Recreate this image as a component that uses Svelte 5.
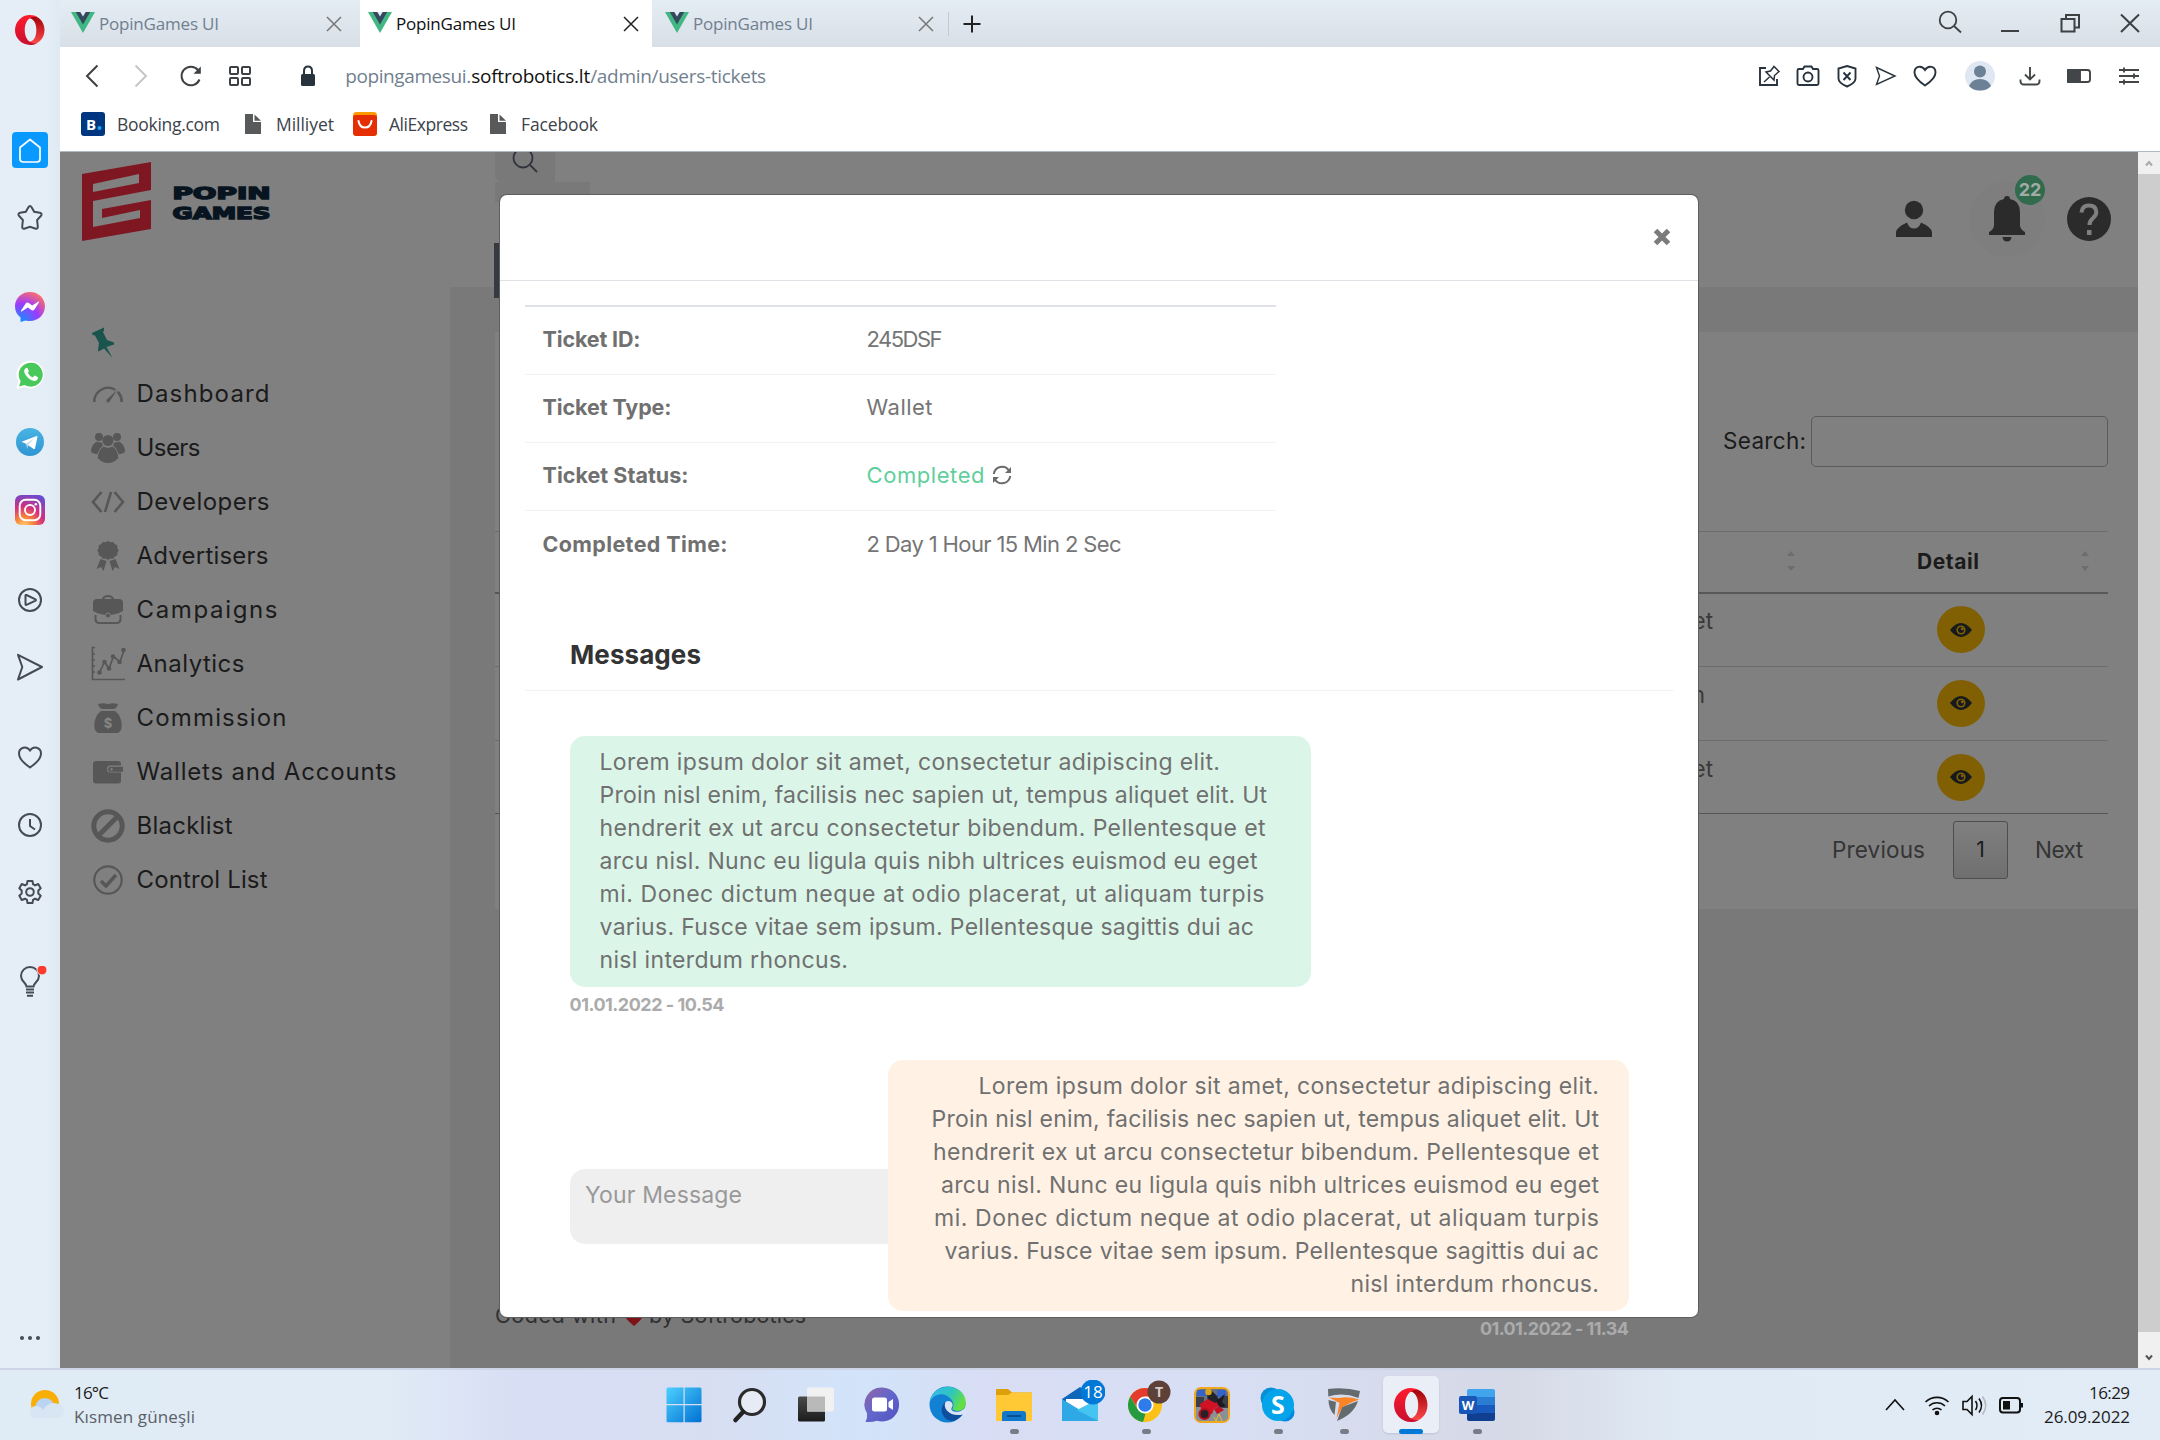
<script>
  const tabs = [false, true, false];
  const bookmarks = [
    { icon: 'booking', label: 'Booking.com', w: 103, gap: 25 },
    { icon: 'file', label: 'Milliyet', w: 58, gap: 19 },
    { icon: 'ali', label: 'AliExpress', w: 79, gap: 22 },
    { icon: 'file', label: 'Facebook', w: 77, gap: 0 }
  ];
  const rail = [
    ['home', 'star'],
    ['messenger', 'whatsapp', 'telegram', 'instagram'],
    ['play', 'send'],
    ['heart', 'clock', 'gear'],
    ['bulb']
  ];
  const menu = [
    ['dash', 'Dashboard', 133],
    ['users', 'Users', 64],
    ['code', 'Developers', 133],
    ['award', 'Advertisers', 132],
    ['case', 'Campaigns', 141],
    ['chart', 'Analytics', 108],
    ['bag', 'Commission', 150],
    ['wallet', 'Wallets and Accounts', 260],
    ['ban', 'Blacklist', 96],
    ['check', 'Control List', 131]
  ];
  const details = [
    ['Ticket ID:', 98, '245DSF', 76],
    ['Ticket Type:', 129, 'Wallet', 66],
    ['Ticket Status:', 146, 'Completed', 118],
    ['Completed Time:', 185, '2 Day 1 Hour 15 Min 2 Sec', 255]
  ];
  const lines = [
    ['Lorem ipsum dolor sit amet, consectetur adipiscing elit.', 620.5],
    ['Proin nisl enim, facilisis nec sapien ut, tempus aliquet elit. Ut', 667.5],
    ['hendrerit ex ut arcu consectetur bibendum. Pellentesque et', 666],
    ['arcu nisl. Nunc eu ligula quis nibh ultrices euismod eu eget', 658],
    ['mi. Donec dictum neque at odio placerat, ut aliquam turpis', 665],
    ['varius. Fusce vitae sem ipsum. Pellentesque sagittis dui ac', 654.5],
    ['nisl interdum rhoncus.', 248.5]
  ];
  const rows = ['et', 'n', 'et'];
  const apps = [
    ['windows'], ['search'], ['taskview'], ['chat'], ['edge'], ['folder', 'dot'], ['mail'],
    ['chrome', 'dot'], ['game'], ['skype', 'dot'], ['shield', 'dot'], ['opera', 'active'], ['word', 'dot']
  ];

  // Tracks a single line of text out (or in) to the given width.
  function fit(node, width) {
    const apply = () => {
      node.style.letterSpacing = '0px';
      node.style.marginRight = '0px';
      const natural = node.getBoundingClientRect().width;
      const gaps = Math.max(1, node.textContent.length - 1);
      const spacing = (width - natural) / gaps;
      node.style.letterSpacing = `${spacing}px`;
      node.style.marginRight = `${-spacing}px`;
    };
    apply();
    requestAnimationFrame(apply);
    document.fonts.ready.then(apply);
  }
</script>

{#snippet operaMark()}
  <svg width="34" height="34" viewBox="0 0 34 34">
    <defs>
      <linearGradient id="opL" x1="0" y1="0" x2="0" y2="1"><stop offset="0" stop-color="#ff1b2d" /><stop offset="1" stop-color="#c8102e" /></linearGradient>
      <linearGradient id="opR" x1="0" y1="0" x2="0" y2="1"><stop offset="0" stop-color="#a00008" /><stop offset="1" stop-color="#ff4b4b" /></linearGradient>
    </defs>
    <path fill="url(#opR)" fill-rule="evenodd" d="M12 3.500C15 0 24 0 28.500 4.700c6.600 6 6.600 18.600 0 24.600C24 34 15 34 12 30.500c9 1.500 12.200-5.500 12.200-13.500S21 2 12 3.500z" />
    <path fill="url(#opL)" fill-rule="evenodd" d="M17 0a17 17 0 1 0 0 34c3.300 0 6.300-.9 9-2.600-8 2.800-15-3.500-15-14.400S18 -.2 26 2.600A17 17 0 0 0 17 0z" />
  </svg>
{/snippet}

{#snippet railIcon(name)}
  {#if name === 'home'}
    <svg width="36" height="36" viewBox="0 0 36 36"><rect width="36" height="36" rx="4" fill="#0a9aff" /><path d="M8 15.500 18 7.500l10 8V27q0 3-3 3H11q-3 0-3-3z" fill="none" stroke="#fff" stroke-width="1.700" stroke-linejoin="round" /></svg>
  {:else if name === 'star'}
    <svg class="line" width="28" height="28" viewBox="0 -1 28 28"><path d="M12.400 3.300q1.600-2.600 3.200 0l2.600 4.500 5.600 1q3 .8 1 3.200l-3.700 4.200.7 6.300q.1 3-2.700 2L14 22.900l-5.100 1.600q-2.800 1-2.700-2l.7-6.300L3.200 12q-2-2.400 1-3.200l5.600-1z" /></svg>
  {:else if name === 'messenger'}
    <svg width="30" height="30" viewBox="0 0 30 30"><defs><radialGradient id="msg" cx=".2" cy="1" r="1.100"><stop offset="0" stop-color="#0c95ff" /><stop offset=".55" stop-color="#9b3bff" /><stop offset="1" stop-color="#ff6f67" /></radialGradient></defs><path fill="url(#msg)" d="M15 0c8.400 0 15 6.200 15 14.300S23.400 29 15 29c-1.500 0-3-.2-4.300-.6L5.500 30V25.500C2 23 0 19 0 14.300 0 6.200 6.600 0 15 0z" /><path fill="#fff" d="m6 18.700 4.600-7.200q1.500-1.700 3.200-.4l3.400 2.500 6.300-4q1-.3.500.7l-4.500 7.200q-1.500 1.600-3.200.4l-3.400-2.500-6.300 4.200q-1 .2-.6-.9z" /></svg>
  {:else if name === 'whatsapp'}
    <svg width="29" height="29" viewBox="0 -.5 29 29"><path fill="#fff" d="M.5 28.500 2.300 21A13.800 13.800 0 1 1 8.500 26.600z" /><path fill="#49c95c" d="M3 26l1.700-5.300A12 12 0 1 1 8.700 24.500z" /><path fill="#fff" d="M10 7.500q1-.8 1.700.4l1 2.300q.3.800-.9 2 1.600 3.200 4.900 4.700l1.500-1.600q.5-.4 1 0l2.400 1.200q.8.500.3 1.700-1.200 2.400-3.700 2.300-3.400-.4-6.600-3.500-3.200-3.200-3.500-6 0-2.200 1.900-3.500z" /></svg>
  {:else if name === 'telegram'}
    <svg width="28" height="28" viewBox="0 0 28 28"><defs><linearGradient id="tg" x1="0" y1="0" x2="0" y2="1"><stop offset="0" stop-color="#48b4e3" /><stop offset="1" stop-color="#2f95d3" /></linearGradient></defs><circle cx="14" cy="14" r="14" fill="url(#tg)" /><path fill="#fff" d="M5.500 13.800 20.700 8q1-.2.700 1.200l-2.400 11.200q-.3 1-1.300.5L10 15.800z" /><path fill="#c3dcec" d="m10 15.800 8.500-5.500-6.500 6.600-.7 4z" /></svg>
  {:else if name === 'instagram'}
    <svg width="30" height="30" viewBox="0 0 30 30"><defs><radialGradient id="ig" cx=".3" cy="1.050" r="1.100"><stop offset="0" stop-color="#fed576" /><stop offset=".28" stop-color="#f9853a" /><stop offset=".6" stop-color="#d42f7e" /><stop offset="1" stop-color="#6a4bd0" /></radialGradient></defs><rect width="30" height="30" rx="6" fill="url(#ig)" /><rect x="4.700" y="4.700" width="20.600" height="20.600" rx="6" fill="none" stroke="#fff" stroke-width="1.900" /><circle cx="15" cy="15" r="5" fill="none" stroke="#fff" stroke-width="1.900" /><circle cx="20.800" cy="9.200" r="1.300" fill="#fff" /></svg>
  {:else if name === 'play'}
    <svg class="line" width="26" height="26" viewBox="0 0 26 26"><circle cx="13" cy="13" r="11" /><path d="M8.500 8.500q0-.8 1-.5l9 4.300q.9.600 0 1.300l-9 4.200q-1 .3-1-.6z" /></svg>
  {:else if name === 'send'}
    <svg class="line" width="28" height="28" viewBox="0 0 28 28"><path d="M2 1.800 26 14 2 26.500 6.300 14z" stroke-linejoin="round" /></svg>
  {:else if name === 'heart'}
    <svg class="line" width="26" height="26" viewBox="0 0 26 26"><path d="M13 23.500Q2 16 2 9.500C2 3.500 9.500 1 13 6.500 16.500 1 24 3.500 24 9.500Q24 16 13 23.500z" /></svg>
  {:else if name === 'clock'}
    <svg class="line" width="26" height="26" viewBox="0 0 26 26"><circle cx="13" cy="13" r="11" /><path d="M13 7v7l5 3.500" /></svg>
  {:else if name === 'gear'}
    <svg class="line" width="26" height="26" viewBox="0 0 26 26"><path d="M10.500 2h5l.5 3.200 2 1.200 3.200-1.400 2.500 4.300L21.300 11.500v3l2.400 2.200-2.500 4.300-3.200-1.300-2 1.100-.5 3.200h-5l-.5-3.200-2-1.100L4.800 21l-2.500-4.300 2.400-2.200v-3L2.300 9.300 4.800 5 8 6.400l2-1.200z" stroke-linejoin="round" /><circle cx="13" cy="13" r="3.800" /></svg>
  {:else if name === 'bulb'}
    <svg class="line" width="34" height="32" viewBox="0 0 34 32"><path d="M13.500 20.500c0-3.500-5.500-5-5.500-10.500a9 9 0 0 1 18 0c0 5.500-5.500 7-5.500 10.500z" /><path d="M13 23.500h8M13 26.500h8M14 29.700h6" stroke-width="2" /><circle cx="29" cy="4" r="5" fill="#ff3b30" stroke="#e4edf6" stroke-width="1" /></svg>
  {/if}
{/snippet}

{#snippet menuIcon(name)}
  <svg width="36" height="36" viewBox="0 0 36 36" fill="#575757">
    {#if name === 'dash'}
      <path d="M3 26a15 15 0 0 1 23-13l-1.300 1.700A12.600 12.600 0 0 0 5.600 26zM28.500 14.700A15 15 0 0 1 33 26h-2.600a12.600 12.600 0 0 0-3.600-9z" /><path d="m27.500 13.500-8 12.200q-1.500 1.300-2.700.2-.9-1.300.4-2.600z" />
    {:else if name === 'users'}
      <circle cx="18" cy="10.500" r="5.500" /><circle cx="9" cy="7" r="4" /><circle cx="27" cy="7" r="4" /><path d="M13.500 16.500q4.500 2.500 9 0 5.500 4 5.800 11.500Q24 33 18 33T7.700 28q.3-7.500 5.800-11.500zM7 11.500q2 1.200 4.300.5.700 2 1.800 3.200-4 3.500-6 9Q3 23.700 1 22q0-7.500 6-10.500zM29 11.500q-2 1.200-4.300.5-.7 2-1.800 3.200 4 3.500 6 9 4.100-.5 6.100-2.200 0-7.500-6-10.500z" />
    {:else if name === 'code'}
      <path d="M11.500 8 3 18l8.500 10M24.500 8 33 18l-8.500 10M21 8l-6 20" fill="none" stroke="#575757" stroke-width="2.600" />
    {:else if name === 'award'}
      <path d="m18 3 2.500 1.200 2.700-.3 1.600 2.200 2.400 1.200.2 2.700 1.300 2.300-1.300 2.400-.2 2.700-2.400 1.200-1.600 2.200-2.700-.3L18 21.800l-2.500-1.300-2.700.3-1.600-2.200-2.400-1.200-.2-2.700-1.300-2.400 1.300-2.300.2-2.700 2.400-1.200 1.600-2.200 2.700.3z" /><path d="m10.500 21 6 2-3 10-2.500-4-4.500 2zM25.500 21l-6 2 3 10 2.500-4 4.500 2z" />
    {:else if name === 'case'}
      <path d="M12 7q1-4 6-4t6 4h5q4 0 4 4v8q-7 4-15 4T3 19v-8q0-4 4-4zm2 0h8q-1-2-4-2t-4 2z" fill-rule="evenodd" /><path d="M5.500 23v4q0 4 4 4h17q4 0 4-4v-4" fill="none" stroke="#575757" stroke-width="2" /><circle cx="18" cy="23.500" r="2.500" stroke="#808080" />
    {:else if name === 'chart'}
      <path d="M5 1.500H2.500v32H35M2 8h3M2 14h3M2 20h3M2 26h3M9.500 26.500l5-10.500 4.500 6.500 4.500-12 6.500 5.500 4-12" fill="none" stroke="#575757" stroke-width="1.700" /><circle cx="9.500" cy="26.500" r="2.300" /><circle cx="14.500" cy="16" r="2.300" /><circle cx="19" cy="22.500" r="2.300" /><circle cx="23" cy="10.500" r="2.300" /><circle cx="29.500" cy="16" r="2.300" /><circle cx="33.500" cy="4" r="2.300" />
    {:else if name === 'bag'}
      <path d="M8 4.500q5-2.500 10-.3 5-2.200 10 .3-1.500 4-4.500 4.500h-11Q9.500 8.500 8 4.500zM11 11h14q7 5 6.700 15.500Q31 33 27 33H9q-4 0-4.700-6.500Q4 16 11 11z" /><text class="coin" x="18" y="28">$</text>
    {:else if name === 'wallet'}
      <path d="M3 10q0-3 3-3h22q3 0 3 3v1.500H20q-3 0-3 3.500t3 3.500h11V27q0 2.500-3 2.500H6q-3 0-3-3z" /><path d="M20 12.800h13v5H20q-2 0-2-2.500t2-2.500zm1.500 1.200a1.300 1.300 0 1 0 .1 0z" fill-rule="evenodd" />
    {:else if name === 'ban'}
      <circle cx="18" cy="18" r="14.200" fill="none" stroke="#575757" stroke-width="5" /><path d="m8.500 27.500 19-19" stroke="#575757" stroke-width="5" />
    {:else if name === 'check'}
      <circle cx="18" cy="18" r="13.700" fill="none" stroke="#575757" stroke-width="2.200" /><path d="m11 19 5 5 10-11" fill="none" stroke="#575757" stroke-width="3.500" />
    {/if}
  </svg>
{/snippet}

{#snippet appIcon(name)}
  {#if name === 'opera'}
    {@render operaMark()}
  {:else}
    <svg width="50" height="50" viewBox="-7 -7 50 50">
      {#if name === 'windows'}
        <defs><linearGradient id="wn" x1="0" y1="0" x2="1" y2="1"><stop offset="0" stop-color="#4dd0ff" /><stop offset="1" stop-color="#0070d2" /></linearGradient></defs>
        <path fill="url(#wn)" d="M2 .5h15.500V17H.500V2q0-1.500 1.500-1.500zM18.700.500H34q1.500 0 1.500 1.500v15H18.700zM.5 18.300h17v17H2q-1.500 0-1.500-1.500zM18.700 18.300h16.800v15.500q0 1.500-1.500 1.500H18.700z" />
      {:else if name === 'search'}
        <circle cx="20" cy="15" r="12.500" fill="#e6ebf6" stroke="#2b2b2b" stroke-width="3.200" /><path d="M11 25 3.500 33" stroke="#222" stroke-width="4.500" stroke-linecap="round" />
      {:else if name === 'taskview'}
        <defs><linearGradient id="tv" x1="0" y1="0" x2="0" y2="1"><stop offset="0" stop-color="#4a4a4a" /><stop offset="1" stop-color="#1c1c1c" /></linearGradient></defs>
        <rect y="9.500" width="27" height="25" rx="1.500" fill="url(#tv)" /><rect x="9" y=".5" width="27" height="24" rx="1.500" fill="#f1f1f1" /><rect x="9" y="9.500" width="18" height="15" fill="#b9b9b9" />
      {:else if name === 'chat'}
        <defs><linearGradient id="ct" x1="0" y1="0" x2="1" y2="1"><stop offset="0" stop-color="#9465a5" /><stop offset=".5" stop-color="#6066cc" /><stop offset="1" stop-color="#5450c0" /></linearGradient></defs>
        <path fill="url(#ct)" d="M18 .5a17 17 0 1 1-5 33.200q-5 1.800-11.500 1.300 2-3 1.600-8.500A17 17 0 0 1 18 .5z" /><rect x="8" y="10.500" width="15" height="14" rx="2.500" fill="#fff" /><path d="m24.500 15 4.500-3v11l-4.500-3z" fill="#fff" />
      {:else if name === 'edge'}
        <defs><linearGradient id="ed" x1="0" y1="0" x2="1" y2=".4"><stop offset="0" stop-color="#35b8f1" /><stop offset=".6" stop-color="#2fc5be" /><stop offset="1" stop-color="#63df45" /></linearGradient></defs>
        <circle cx="17.500" cy="17.500" r="18" fill="#1280d3" /><path fill="url(#ed)" d="M0 14.500C2-5 35-6 35.800 15.500c.2 9-9 9.500-12.800 7.300q-1.500-1 .2-3C26 12.500 10-1 0 14.500z" /><path fill="#0d4f9c" d="M15 15q-7 8 0 16 8 8 18.500-4.500Q25 30 20 24z" /><path fill="#dae3f6" d="M15.500 15c4-3 9 1.500 6.500 5-1.500 2.500-.5 4 3 4.700 5 .8 9.500-2.200 11-6v11L33 27.500c-12 3-21-5.500-17.500-12.500z" />
      {:else if name === 'folder'}
        <path fill="#dd9f0a" d="M0 3q0-1 1-1h11l4 3.500h19q1 0 1 1V12H0z" /><path fill="#ffc935" d="M0 8h12l4-2.500h20V34H0z" /><path fill="#0f78cb" d="M6 34v-7q0-3 3-3h18q3 0 3 3v7z" /><path d="M11 29h14" stroke="#0a4b8a" stroke-width="1.800" />
      {:else if name === 'mail'}
        <path fill="#1066b8" d="M0 12 18 0l18 12v22H0z" /><path fill="#fff" d="M4 12h28v12H4z" /><path fill="#2fa9e5" d="M0 12v22h36z" /><path fill="#45c4f1" d="M36 12v22L15 23z" /><circle cx="31" cy="5" r="12.500" fill="#0078d7" /><text class="count" x="31" y="11">18</text>
      {:else if name === 'chrome'}
        <circle cx="17" cy="18" r="17" fill="#fbc116" /><path fill="#e33b2e" d="M17 1A17 17 0 0 1 31.700 9.500H17L9 20 2.300 9.500A17 17 0 0 1 17 1z" /><path fill="#249a41" d="M2.300 9.500 9.600 22q3 4.500 8 4.500L15 35A17 17 0 0 1 2.300 9.500z" /><circle cx="17" cy="18" r="8.500" fill="#fff" /><circle cx="17" cy="18" r="6.700" fill="#2e7cec" /><circle cx="31" cy="5" r="11.500" fill="#5d4038" /><text class="initial" x="31" y="10">T</text>
      {:else if name === 'game'}
        <rect x="1" y="1" width="34" height="34" rx="6" fill="#69717c" stroke="#f0a81c" stroke-width="2" /><path fill="#3663c9" d="M3 3h9v6H3zM23 3h9v7h-9z" /><path fill="#8a9096" d="M2 20h32v9q0 5-5 5H7q-5 0-5-5z" /><path fill="#3a3e48" d="M2 10h8v10H2zM28 9h6v12h-6z" /><path fill="#23242b" d="m13 7 5-3 5 5 3 6-6 4-6-4z" /><circle cx="14.500" cy="5" r="3.300" fill="#d9a51c" /><path fill="#d01224" d="m6 17 8-5 7 4 9-7-3 8-7 5-2 5-8-1-3-4z" /><path fill="#1a1b22" d="m22 14 9-7-3 8 4 4-6 2z" /><circle cx="10.500" cy="27" r="5" fill="#2a2024" stroke="#b50f20" stroke-width="2.200" /><path d="m20 22 5-3 5 4-7 4z" fill="#c51122" /><path d="m20 30 2 4 3-7 3 7" stroke="#e4c22a" fill="none" />
      {:else if name === 'skype'}
        <circle cx="11" cy="11" r="10.500" fill="#0b8ed8" /><circle cx="25" cy="25" r="9.500" fill="#0089e0" /><circle cx="18" cy="18" r="16" fill="#03a4ea" /><text class="skype" x="18" y="27">S</text>
      {:else if name === 'shield'}
        <path fill="#646b6e" d="M2 2q17-2 32 2l-1.500 7Q17 5 2.300 9.500zM2.500 13l7.500 2-1.500 13Q2.500 22 2.500 13zM32 14q-4 13-21 20l5-14z" /><path fill="#fb8427" d="m3 10.500 10 .5q9-2 20 1.500-9 3-17 8l-5.500 11 3-15.500z" />
      {:else if name === 'word'}
        <path fill="#41a5ee" d="M8 4q0-2 2-2h24q2 0 2 2v6H8z" /><path fill="#2b7cd3" d="M8 10h28v8H8z" /><path fill="#185abd" d="M8 18h28v8H8z" /><path fill="#103f91" d="M8 26h28v6q0 2-2 2H10q-2 0-2-2z" /><rect y="9" width="18" height="18" rx="2" fill="#1a56b8" /><text class="wd" x="9" y="23">W</text>
      {/if}
    </svg>
  {/if}
{/snippet}

{#snippet bubble(side, stamp, w)}
  <article class="message {side}">
    <div class="bubble">
      {#each lines as [text, width]}
        <div class="ln"><span use:fit={width}>{text}</span></div>
      {/each}
    </div>
    <div class="stamp"><span use:fit={w}>{stamp}</span></div>
  </article>
{/snippet}

<div class="screen">
  <div class="browser">
    <aside class="rail">
      <div class="brand">{@render operaMark()}</div>
      {#each rail as group}
        <div class="group">
          {#each group as name}<div class="cell">{@render railIcon(name)}</div>{/each}
        </div>
      {/each}
      <div class="more"><i></i><i></i><i></i></div>
    </aside>

    <div class="window">
      <div class="tabs">
        {#each tabs as active}
          <div class="tab" class:active>
            <svg width="24" height="21" viewBox="0 0 24 21"><path fill="#41b883" d="M0 0h24L12 21z" /><path fill="#35495e" d="M4.800 0h14.400L12 12.500z" /><path fill="#e2eaf2" d="M9.300 0h5.400L12 4.600z" /></svg>
            <span class="tabname"><span use:fit={120}>PopinGames UI</span></span>
            <svg class="x" width="16" height="16" viewBox="0 0 16 16"><path d="m1 1 14 14M15 1 1 15" /></svg>
          </div>
        {/each}
        <svg class="plus" width="20" height="20" viewBox="0 0 20 20"><path d="M10 1.500v17M1.500 10h17" stroke="#222" stroke-width="2" /></svg>
        <div class="controls">
          <svg viewBox="0 0 60 47"><circle cx="28" cy="20" r="8.300" /><path d="m34 26 7 6.500" /></svg>
          <svg viewBox="0 0 60 47"><path d="M21 31h18" stroke-width="2" /></svg>
          <svg viewBox="0 0 60 47"><path d="M21.500 19h13v12.500h-13zM26 19v-4h13v12.500h-4.500" stroke-width="2" /></svg>
          <svg viewBox="0 0 60 47"><path d="m21 14.500 18 17.500M39 14.500 21 32" stroke-width="2" /></svg>
        </div>
      </div>

      <div class="nav">
        <div class="nb"><svg width="14" height="24" viewBox="0 0 14 24"><path d="M12.500 1.500 2 12l10.500 10.500" /></svg></div>
        <div class="nb off"><svg width="14" height="24" viewBox="0 0 14 24"><path d="M1.500 1.500 12 12 1.500 22.500" /></svg></div>
        <div class="nb"><svg width="24" height="24" viewBox="-1 0 24 24"><path d="M20.500 15.500A9.300 9.300 0 1 1 19 6" /><path d="M21.800 2.500v7.300h-7.300z" fill="#3d4144" stroke="none" /></svg></div>
        <div class="nb"><svg width="24" height="24" viewBox="0 0 24 24"><rect x="2" y="3" width="8" height="7" rx="1" /><rect x="14" y="3" width="8" height="7" rx="1" /><rect x="2" y="14" width="8" height="7" rx="1" /><rect x="14" y="14" width="8" height="7" rx="1" /></svg></div>
        <div class="lock"><svg width="16" height="22" viewBox="0 0 16 22"><path d="M4 10V6q0-4.500 4-4.500T12 6v4" fill="none" stroke="#28333d" stroke-width="2" /><rect x="1" y="9" width="14" height="12" rx="1.500" fill="#28333d" /></svg></div>
        <div class="url"><span use:fit={126}>popingamesui.</span><b use:fit={119}>softrobotics.lt</b><span use:fit={176}>/admin/users-tickets</span></div>
        <div class="tools">
          <svg viewBox="0 0 26 26"><path d="M10 5H4v17h17v-6" /><path d="m14.500 8 3.500-4.500 5 5-4.500 4-.5 4.500-8-8zm-1 6-5.500 5" stroke-width="1.500" /></svg>
          <svg viewBox="0 0 26 26"><path d="M8 6l1.500-2.500h7L18 6h4q1.500 0 1.500 1.500v13q0 1.500-1.500 1.500H4q-1.500 0-1.500-1.500v-13Q2.500 6 4 6z" /><circle cx="13" cy="14" r="4.500" /></svg>
          <svg viewBox="0 0 26 26"><path d="M13 3l8.500 2.500v10Q21.500 20 13 23.500 4.500 20 4.500 15.500v-10zM9.500 9.500l7 7.500m0-7.500-7 7.500" /></svg>
          <svg viewBox="0 0 26 26"><path d="M3.500 4.500 22 13 3.500 21.500 6.500 13z" stroke-width="1.400" /></svg>
          <svg viewBox="0 0 26 26"><path d="M13 22.500Q2.500 15.500 2.500 9.500C2.500 3.500 9.500 1.500 13 7 16.500 1.500 23.500 3.500 23.500 9.500Q23.500 15.500 13 22.500z" /></svg>
        </div>
        <div class="tools wide">
          <svg viewBox="0 0 30 30"><circle cx="15" cy="15" r="15" fill="#dfe8f2" stroke="none" /><g fill="#6c8096" stroke="none"><circle cx="15" cy="10.500" r="6" /><path d="M4 25q3-7 11-7t11 7q-4 4.500-11 4.500T4 25z" /></g></svg>
          <svg viewBox="0 0 30 30"><path d="M5.500 18.500V20q0 3.500 3.500 3.500h12q3.500 0 3.500-3.500v-1.500M15 6v12m-5-4.500 5 5 5-5" /></svg>
          <svg viewBox="0 0 30 30"><rect x="4" y="9" width="22" height="12" rx="2.500" /><path d="M4 9h12v12H4z" fill="#434648" /></svg>
          <svg viewBox="0 0 30 30"><path d="M5 9h20M5 15h20M5 21h20M10 6.500v5M20 12.500v5M10 18.500v5" /></svg>
        </div>
      </div>

      <div class="marks">
        {#each bookmarks as b}
          {#if b.icon === 'booking'}
            <svg width="24" height="24" viewBox="0 0 24 24"><rect width="24" height="24" rx="3" fill="#003580" /><text class="bk" x="10" y="17.500">B</text><circle cx="18.500" cy="16" r="2" fill="#17a6ee" /></svg>
          {:else if b.icon === 'ali'}
            <svg width="24" height="24" viewBox="0 0 24 24"><rect width="24" height="24" rx="3.500" fill="#ff9a00" /><path d="M0 5q0-2 3-2h18q3 0 3 2v15.500q0 3.500-3.500 3.500h-17Q0 24 0 20.500z" fill="#e62e04" /><path d="M5.500 9q1 6.500 6.500 6.500T18.500 9" fill="none" stroke="#fff" stroke-width="2" stroke-linecap="round" /></svg>
          {:else}
            <svg class="doc" width="16" height="20" viewBox="0 0 16 20"><path d="M0 0h8v8h8v12H0zM9.500.5 16 6.800H9.500z" fill="#58595b" /></svg>
          {/if}
          <span class="mark" style="margin-right:{b.gap}px"><span use:fit={b.w}>{b.label}</span></span>
        {/each}
      </div>

      <div class="page">
        <div class="sidebar">
          <svg class="logo" width="190" height="82" viewBox="0 0 190 82">
            <path fill="#7f1722" fill-rule="evenodd" d="M0 13 69 1v28L11 40v26l47-9V49l-38 8V48l49-9v29L0 80zM11 23v8l46-9v-9z" />
            <text x="90.500" y="38" textLength="98" lengthAdjust="spacingAndGlyphs">POPIN</text>
            <text x="90.500" y="57.500" textLength="98" lengthAdjust="spacingAndGlyphs">GAMES</text>
          </svg>
          <svg class="pin" width="24" height="32" viewBox="0 0 24 32"><path fill="#1b544c" d="M1 6 13 .5v3L12 5l4 8 7 2.500v2L15.500 20l6 11L13 21.500l-5.500 3-.5-1.500 1-7-4-7.500-2.500-.5z" /></svg>
          <nav>
            {#each menu as [icon, label, w]}
              <div class="item">{@render menuIcon(icon)}<span use:fit={w}>{label}</span></div>
            {/each}
          </nav>
        </div>

        <div class="content">
          <header class="top">
            <div class="find"><svg width="30" height="30" viewBox="0 0 30 30"><circle cx="13" cy="11" r="9.500" /><path d="m20 18 7 7" /></svg></div>
            <div class="find-drop"></div>
            <div class="accent"></div>
            <div class="actions">
              <svg width="36" height="38" viewBox="0 0 36 38" fill="#2b2b2b"><circle cx="18" cy="10" r="9.200" /><path d="M0 37V32q1-5 11-9.500 2 6 7 6t7-6Q35 27 36 32v5z" /></svg>
              <div class="bell">
                <svg width="36" height="46" viewBox="0 0 36 46" fill="#2b2b2b"><path d="M15 3q0-3 3-3t3 3q10 2 10 13v14q1 4 5 6v3H0v-3q4-2 5-6V16Q5 5 15 3zM13.500 41h9q-.5 4.500-4.500 4.500T13.500 41z" /></svg>
                <span class="badge">22</span>
              </div>
              <svg width="44" height="44" viewBox="0 0 44 44"><circle cx="22" cy="22" r="22" fill="#2b2b2b" /><path d="M14.500 15.500q.5-7 7.500-7t7.300 6.500q0 3.500-3.500 6.300-3.300 2.500-3.300 6.700" fill="none" stroke="#808080" stroke-width="4" /><rect x="20" y="33" width="4.500" height="5" fill="#808080" /></svg>
            </div>
          </header>

          <section class="card">
            <div class="searchrow"><span use:fit={83}>Search:</span><div class="field"></div></div>
            <div class="grid head">
              <div class="sort"><svg width="8" height="20" viewBox="0 0 8 20"><path d="M4 0l4 5H0zM4 20l4-5H0z" /></svg></div>
              <b><span use:fit={62}>Detail</span></b>
              <div class="sort"><svg width="8" height="20" viewBox="0 0 8 20"><path d="M4 0l4 5H0zM4 20l4-5H0z" /></svg></div>
            </div>
            {#each rows as r, i}
              <div class="grid row">
                <span class="kind" class:short={i === 1}>{r}</span>
                <div class="eye"><svg width="22" height="16" viewBox="0 0 22 16"><path fill="#171a1c" d="M0 8Q11-6 22 8 11 22 0 8z" /><circle cx="11" cy="8" r="4.600" fill="#806003" /><circle cx="11" cy="8" r="3" fill="#171a1c" /><circle cx="12.300" cy="6.800" r="1.500" fill="#806003" /></svg></div>
              </div>
            {/each}
            <div class="pager"><span use:fit={93}>Previous</span><div class="num">1</div><span use:fit={48}>Next</span></div>
          </section>

          <footer class="credit"><span use:fit={121}>Coded with</span><svg width="20" height="18" viewBox="0 0 20 18"><path fill="#7f1216" d="M10 18Q0 10 0 5.500C0-.5 8-1.500 10 4 12-1.500 20-.5 20 5.500 20 10 10 18 10 18z" /></svg><span use:fit={157}>by Softrobotics</span></footer>
        </div>

        <div class="scroll">
          <div class="arrow"><svg width="8" height="7" viewBox="0 0 8 7"><path d="M1 5.500 4 2l3 3.500" stroke="#a9a9a9" /></svg></div>
          <div class="thumb"></div>
          <div class="arrow end"><svg width="8" height="7" viewBox="0 0 8 7"><path d="M1 1.500 4 5l3-3.500" stroke="#555" /></svg></div>
        </div>

        <div class="modal">
          <div class="mhead"><svg width="18" height="18" viewBox="0 0 18 18"><path d="m2.500 2.500 13 13M15.500 2.500l-13 13" stroke="#7b7b7b" stroke-width="5" /></svg></div>
          <div class="details">
            {#each details as [k, kw, v, vw], i}
              <div class="drow">
                <strong><span use:fit={kw}>{k}</span></strong>
                <span class="val" class:done={i === 2} use:fit={vw}>{v}</span>
                {#if i === 2}
                  <svg width="20" height="20" viewBox="0 0 20 20"><path d="M1.800 9A8.300 8.300 0 0 1 17 5.500M18.200 11A8.300 8.300 0 0 1 3 14.500" fill="none" stroke="#6b6b6b" stroke-width="2" /><path d="M19 2v6h-6zM1 18v-6h6z" fill="#6b6b6b" /></svg>
                {/if}
              </div>
            {/each}
          </div>
          <h3><span use:fit={131}>Messages</span></h3>
          <div class="composer"><span use:fit={157}>Your Message</span></div>
          {@render bubble('in', '01.01.2022 - 10.54', 155)}
          {@render bubble('out', '01.01.2022 - 11.34', 149)}
        </div>
      </div>
    </div>
  </div>

  <div class="taskbar">
    <div class="weather">
      <svg width="34" height="30" viewBox="0 0 34 30"><circle cx="15" cy="14" r="14" fill="#f9ae06" /><path fill="#b9d3f0" d="M5 18q1-9 9-10 8 0 10 7l-2 8H5z" /><path fill="#d8e6f3" d="M5 28q-5-1-5-6 0-6 6-6 5 0 7 4 3-6 10-7 10 0 11 8-1 7-7 7z" /></svg>
      <div><p><span use:fit={35}>16°C</span></p><p class="dim"><span use:fit={121}>Kısmen güneşli</span></p></div>
    </div>
    <div class="apps">
      {#each apps as [name, state]}
        <div class="app" class:current={state === 'active'}>
          {@render appIcon(name)}
          {#if state}<i class={state}></i>{/if}
        </div>
      {/each}
    </div>
    <div class="tray">
      <svg viewBox="0 0 36 30"><path d="m9 20 9-10 9 10" /></svg>
      <svg viewBox="0 0 36 30"><path d="M6.500 12a16.500 16.500 0 0 1 23 0M10 16a11.500 11.500 0 0 1 16 0M13.500 20a6.500 6.500 0 0 1 9 0" /><circle cx="18" cy="23" r="1.500" fill="#111" /></svg>
      <svg viewBox="0 0 36 30"><path d="M7 11.500h4l5-5v18l-5-5H7zM19.500 11q3 4.500 0 9M23 8.500q5 7 0 14" /><path d="M26.500 6.500q6.500 9 0 18" stroke="#b3bac4" /></svg>
      <svg viewBox="0 0 36 30"><rect x="7" y="8" width="20" height="14.500" rx="3" stroke-width="2" /><path d="M10 11h7v8.500h-7zM28 13h2v4.500h-2z" fill="#111" stroke="none" /></svg>
    </div>
    <div class="time"><p><span use:fit={41}>16:29</span></p><p><span use:fit={86}>26.09.2022</span></p></div>
  </div>
</div>

<style>
  :global(body) { margin: 0; }
  .screen { width: 2160px; height: 1440px; display: grid; grid-template-rows: 1368px 72px; overflow: hidden; font-family: Inter, 'Liberation Sans', sans-serif; box-sizing: border-box; }
  .screen :global(*) { box-sizing: border-box; }
  svg { display: block; flex: none; }
  span, b { white-space: nowrap; }
  p, h3 { margin: 0; }
  .browser { display: flex; }

  .rail { width: 60px; background: linear-gradient(90deg, #e5eef6 75%, #dfe9f3); display: flex; flex-direction: column; }
  .brand { height: 116px; display: flex; justify-content: center; padding-top: 15px; }
  .brand svg { width: 30px; height: 30px; }
  .group { margin-bottom: 22.500px; }
  .cell { height: 67.500px; display: grid; place-items: center; }
  .line { fill: none; stroke: #444b57; stroke-width: 2; }
  .more { margin-top: auto; height: 60px; display: flex; align-items: center; justify-content: center; gap: 4px; }
  .more i { width: 4px; height: 4px; border-radius: 50%; background: #444b57; }

  .window { width: 2100px; display: flex; flex-direction: column; background: #fff; }
  .tabs { height: 47px; display: flex; align-items: center; padding-left: 3px; background: linear-gradient(#e4ecf4, #d8dfe7); font-family: 'Open Sans', sans-serif; font-size: 17px; }
  .tab { width: 292px; height: 47px; margin-right: 5px; display: flex; align-items: center; padding-left: 8px; color: #71808f; }
  .tab > svg:first-child { margin-bottom: 2px; }
  .tab.active { background: #fff; color: #111; }
  .tabname { width: 231px; padding-left: 4px; }
  .x path { stroke: #777; stroke-width: 1.500; }
  .active .x path { stroke: #222; }
  .tab:nth-child(3)::after { content: ''; width: 1px; height: 24px; margin-left: 14px; background: #c3cad4; flex: none; }
  .plus { margin-left: 8px; }
  .controls { margin-left: auto; display: flex; }
  .controls svg { width: 60px; height: 47px; fill: none; stroke: #3d4144; stroke-width: 1.800; }

  .nav { height: 57px; display: flex; align-items: center; padding: 0 6px 0 7px; }
  .nb { width: 49.300px; display: grid; place-items: center; }
  .nb svg { fill: none; stroke: #3d4144; stroke-width: 2; }
  .nb.off svg { stroke: #c4c6c8; }
  .lock { width: 81px; padding-left: 36px; }
  .url { font-family: 'Open Sans', sans-serif; font-size: 19px; color: #71808f; display: flex; }
  .url b { font-weight: 400; color: #111; }
  .tools { margin-left: auto; display: flex; align-items: center; }
  .tools svg { width: 26px; height: 26px; margin: 0 6.500px; fill: none; stroke: #28333d; stroke-width: 1.900; }
  .tools.wide { margin-left: 10px; }
  .wide svg { width: 30px; height: 30px; margin: 0 9.900px; stroke: #434648; }
  .marks { height: 48px; padding: 0 0 7px 21px; border-bottom: 1px solid #afbac6; display: flex; align-items: center; font-family: 'Open Sans', sans-serif; font-size: 17.500px; color: #3c434b; }
  .mark { padding-left: 12px; }
  .doc + .mark { padding-left: 15px; }
  .bk { font: bold 15px 'Open Sans', sans-serif; fill: #fff; text-anchor: middle; }

  .page { height: 1216px; display: flex; position: relative; background: #797979; }
  .sidebar { width: 390px; background: #808080; }
  .logo { margin: 9px 0 0 22px; }
  .logo text { font: bold 16px 'DejaVu Sans', sans-serif; fill: #081520; stroke: #081520; stroke-width: 1.400; }
  .pin { margin: 84px 0 0 31px; }
  nav { margin-top: 7.500px; }
  .item { height: 54px; display: flex; align-items: center; gap: 10.500px; padding-left: 30px; font-size: 24px; color: #1b1b1b; }
  .coin { font: bold 13px Inter, sans-serif; fill: #858585; text-anchor: middle; }

  .content { width: 1688px; display: flex; flex-direction: column; }
  .top { height: 135px; background: #808080; position: relative; display: flex; justify-content: flex-end; }
  .find { position: absolute; left: 45px; top: 0; width: 60px; height: 30px; background: #797979; border-radius: 0 0 0 8px; overflow: hidden; }
  .find svg { margin: -5px 0 0 15px; fill: none; stroke: #30343a; stroke-width: 1.800; }
  .find-drop { position: absolute; left: 45px; top: 30px; width: 95px; height: 20px; background: #797979; }
  .accent { position: absolute; left: 44px; top: 91px; width: 10px; height: 55px; background: #343a40; }
  .actions { display: flex; align-items: center; padding: 0 27px 1px 0; }
  .actions > svg:first-child { margin-right: 37px; }
  .bell { width: 76px; height: 76px; margin-right: 22px; border-radius: 50%; background: #7e7e7e; display: grid; place-items: center; position: relative; }
  .badge { position: absolute; left: 46px; top: -6px; width: 30px; height: 30px; border-radius: 50%; background: #2f6b4c; color: #a3aaa6; font-size: 18px; font-weight: 700; line-height: 29px; text-align: center; }

  .card { margin: 45px 0 0 45px; height: 577px; padding: 83.500px 30px 0 0; background: #808080; font-size: 22.500px; color: #1b1b1b; }
  .searchrow { height: 51px; display: flex; align-items: center; justify-content: flex-end; gap: 5px; }
  .searchrow span { padding-bottom: 2px; }
  .field { width: 297px; height: 51px; border: 1px solid #5a5a5a; border-radius: 5px; }
  .grid { display: flex; border-bottom: 1px solid #6c6c6c; }
  .head { margin-top: 64px; height: 63px; border-top: 1px solid #6c6c6c; border-bottom: 2px solid #585858; align-items: center; justify-content: flex-end; padding: 0 19px 1px 0; }
  .head b { width: 286px; padding-left: 122px; font-size: 21px; }
  .sort svg { fill: #6d6d6d; }
  .row { height: 73.800px; justify-content: space-between; padding: 12.500px 123.500px 0 0; }
  .row:nth-last-child(2) { height: 72.500px; border-color: #555; }
  .kind { width: 1218px; text-align: right; line-height: 30px; color: #3a3a3a; flex: none; }
  .kind.short { padding-right: 8px; }
  .eye { width: 48px; height: 47px; border-radius: 50%; background: #806003; display: grid; place-items: center; }
  .pager { display: flex; justify-content: flex-end; align-items: center; margin-top: 7px; padding-right: 25px; color: #343434; }
  .num { width: 55px; height: 58px; margin: 0 27px 0 28px; border: 1px solid #4e4e4e; border-radius: 3px; background: linear-gradient(#808080, #6f6f6f); text-align: center; line-height: 56px; color: #1b1b1b; font-size: 21px; }
  .credit { margin: 391px 0 0 45px; height: 30px; display: flex; align-items: center; font-size: 21.500px; color: #303030; }
  .credit svg { margin: 3px 5px 0 8px; }

  .scroll { width: 22px; display: flex; flex-direction: column; }
  .arrow { height: 22px; background: #f0f0f0; display: grid; place-items: center; }
  .arrow path { fill: none; stroke-width: 2; }
  .thumb { flex: 1; background: #cdcdcd; }
  .arrow.end { height: 36px; padding-top: 15px; }

  .modal { position: absolute; left: 440px; top: 43px; width: 1198px; height: 1121.500px; background: #fff; border-radius: 7px; box-shadow: 0 0 0 1px #5e5e5e; color: #757575; font-size: 22px; }
  .mhead { height: 86px; border-bottom: 1px solid #dee2e6; display: flex; justify-content: flex-end; padding: 33px 27px 0 0; }
  .details { width: 751px; margin: 24px 0 0 25px; border-top: 2px solid #dee2e6; }
  .drow { height: 68px; display: flex; align-items: center; padding: 0 0 3px 17.500px; border-bottom: 1px solid #f1f3f4; }
  .drow:last-child { border: 0; }
  .drow strong { width: 324px; font-size: 21.500px; color: #707070; }
  .drow svg { margin-left: 7px; }
  .drow .done { color: #5fcf9c; }
  h3 { margin: 54px 24px 0 25px; height: 58px; padding-left: 45px; border-bottom: 1px solid #f1f3f4; font-size: 26px; line-height: 44px; color: #333; }
  .message { position: relative; padding: 0 69px 0 69.500px; }
  .in { margin-top: 45px; }
  .out { margin-top: 36.500px; display: flex; flex-direction: column; align-items: flex-end; text-align: right; }
  .bubble { width: 741.500px; height: 251px; padding: 10px 30px; border-radius: 15px; background: #dbf6e8; font-size: 23px; line-height: 33px; color: #707070; }
  .out .bubble { background: #fff2e4; }
  .ln { height: 33px; white-space: nowrap; }
  .stamp { height: 36px; line-height: 36px; font-size: 18px; font-weight: 700; color: #ababab; }
  .composer { position: absolute; left: 70px; top: 974px; width: 1059px; height: 75px; padding: 10px 15px; border-radius: 15px; background: #efefef; line-height: 33px; color: #999; font-size: 23px; }

  .taskbar { position: relative; display: flex; align-items: center; border-top: 2px solid #ccd4e5; background: linear-gradient(90deg, #dfebf5 0, #e0ebf6 18%, #d8def4 24%, #d7def2 33%, #d2e4fa 40%, #d8ddf4 46%, #d7dff5 56%, #d6d9e6 70%, #dfeaf5 78%, #e1ecf6 100%); font-family: 'Open Sans', sans-serif; font-size: 17px; color: #1b1b1b; }
  .weather { width: 650.500px; display: flex; align-items: center; gap: 10px; padding-left: 30px; }
  .weather p, .time p { height: 24px; line-height: 24px; }
  .dim { color: #5b6067; }
  .apps { display: flex; }
  .app { position: relative; width: 66.100px; height: 70px; padding-bottom: 1px; display: grid; place-items: center; }
  .app.current::before { content: ''; position: absolute; left: 5px; top: 6px; width: 56px; height: 57px; border-radius: 5px; background: #eaeef7; box-shadow: 0 1px 2px #bcc2d0; }
  .app > svg { position: relative; }
  .app i { position: absolute; bottom: 6px; left: 29px; width: 9px; height: 5px; border-radius: 3px; background: #777c87; }
  .app i.active { left: 21px; width: 24px; background: #0078d7; }
  .count { font: 17px 'Open Sans', sans-serif; fill: #fff; text-anchor: middle; }
  .initial { font: bold 14px 'Open Sans', sans-serif; fill: #d5ccc9; text-anchor: middle; }
  .skype { font: bold 25px 'Open Sans', sans-serif; fill: #fff; text-anchor: middle; }
  .wd { font: bold 13px 'Open Sans', sans-serif; fill: #fff; text-anchor: middle; }
  .tray { margin-left: auto; display: flex; }
  .tray svg { width: 36px; height: 30px; margin-left: 1px; fill: none; stroke: #111; stroke-width: 1.600; }
  .tray svg:first-child { margin-right: 5px; }
  .time { width: 131px; padding-right: 30px; text-align: right; }
</style>
